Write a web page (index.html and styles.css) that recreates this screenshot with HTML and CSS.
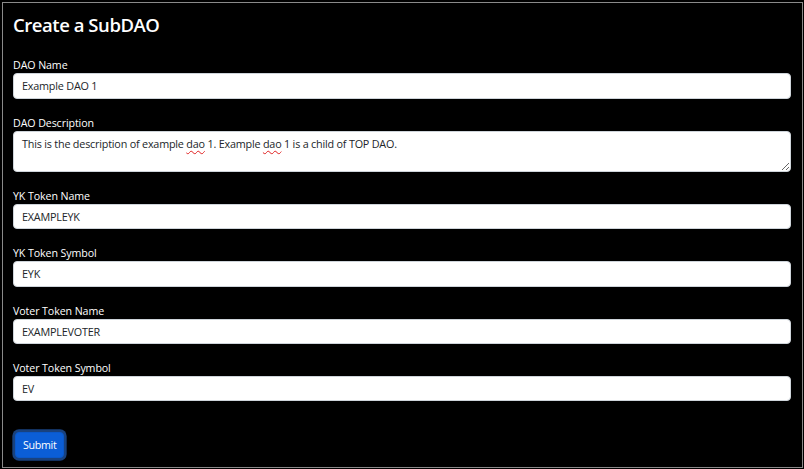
FILE: index.html
```html
<!DOCTYPE html>
<html lang="en">
<head>
<meta charset="utf-8">
<title>Create a SubDAO</title>
<link rel="stylesheet" href="styles.css">
</head>
<body>
<div class="frame">
  <h2 class="title">Create a SubDAO</h2>
  <form class="form">
    <div class="group">
      <label class="label">DAO Name</label>
      <div class="control">Example DAO 1</div>
    </div>
    <div class="group">
      <label class="label">DAO Description</label>
      <div class="control area">This is the description of example <span class="spell">dao</span> 1. Example <span class="spell">dao</span> 1 is a child of TOP DAO.</div>
    </div>
    <div class="group">
      <label class="label">YK Token Name</label>
      <div class="control">EXAMPLEYK</div>
    </div>
    <div class="group">
      <label class="label">YK Token Symbol</label>
      <div class="control">EYK</div>
    </div>
    <div class="group">
      <label class="label">Voter Token Name</label>
      <div class="control">EXAMPLEVOTER</div>
    </div>
    <div class="group">
      <label class="label">Voter Token Symbol</label>
      <div class="control">EV</div>
    </div>
    <div class="actions">
      <button type="button" class="btn">Submit</button>
    </div>
  </form>
</div>
</body>
</html>
```
FILE: styles.css
```css
html, body {
  margin: 0;
  padding: 0;
  background: #000;
}
body {
  width: 804px;
  height: 469px;
  box-sizing: border-box;
  padding: 2px 1px 1px 2px;
  font-family: "Open Sans", "Noto Sans", sans-serif;
}
.frame {
  box-sizing: border-box;
  height: 100%;
  border: 1px solid #8a8a8a;
  background: #000;
  padding: 0 11px 0 10px;
  color: #fff;
}
.title {
  margin: 0;
  padding-top: 9px;
  font-size: 18.5px;
  font-weight: 600;
  line-height: 26px;
  letter-spacing: -0.45px;
}
.form {
  margin-top: 19.3px;
}
.group {
  margin-bottom: 16px;
}
.label {
  display: block;
  font-size: 10.67px;
  line-height: 16px;
  margin: 0;
  letter-spacing: -0.1px;
}
.control {
  box-sizing: border-box;
  height: 25.33px;
  background: #fff;
  border: 1px solid #ced4da;
  border-radius: 4px;
  color: #212529;
  font-size: 10.8px;
  line-height: 16px;
  padding: 4px 8px;
  letter-spacing: -0.2px;
}
.area {
  height: 41.33px;
  resize: vertical;
  overflow: auto;
}
.spell {
  text-decoration: underline wavy #e02020;
  text-decoration-thickness: 1px;
  text-underline-offset: 2px;
}
.actions {
  padding-top: 14.7px;
  padding-left: 2px;
}
.btn {
  font-family: inherit;
  font-size: 10.67px;
  line-height: 16px;
  color: #fff;
  background: #0b5ed7;
  border: 1px solid #0a58ca;
  border-radius: 4px;
  padding: 4px 7px;
  box-shadow: 0 0 0 2.67px rgba(49, 132, 253, 0.5);
  letter-spacing: -0.3px;
}
```
